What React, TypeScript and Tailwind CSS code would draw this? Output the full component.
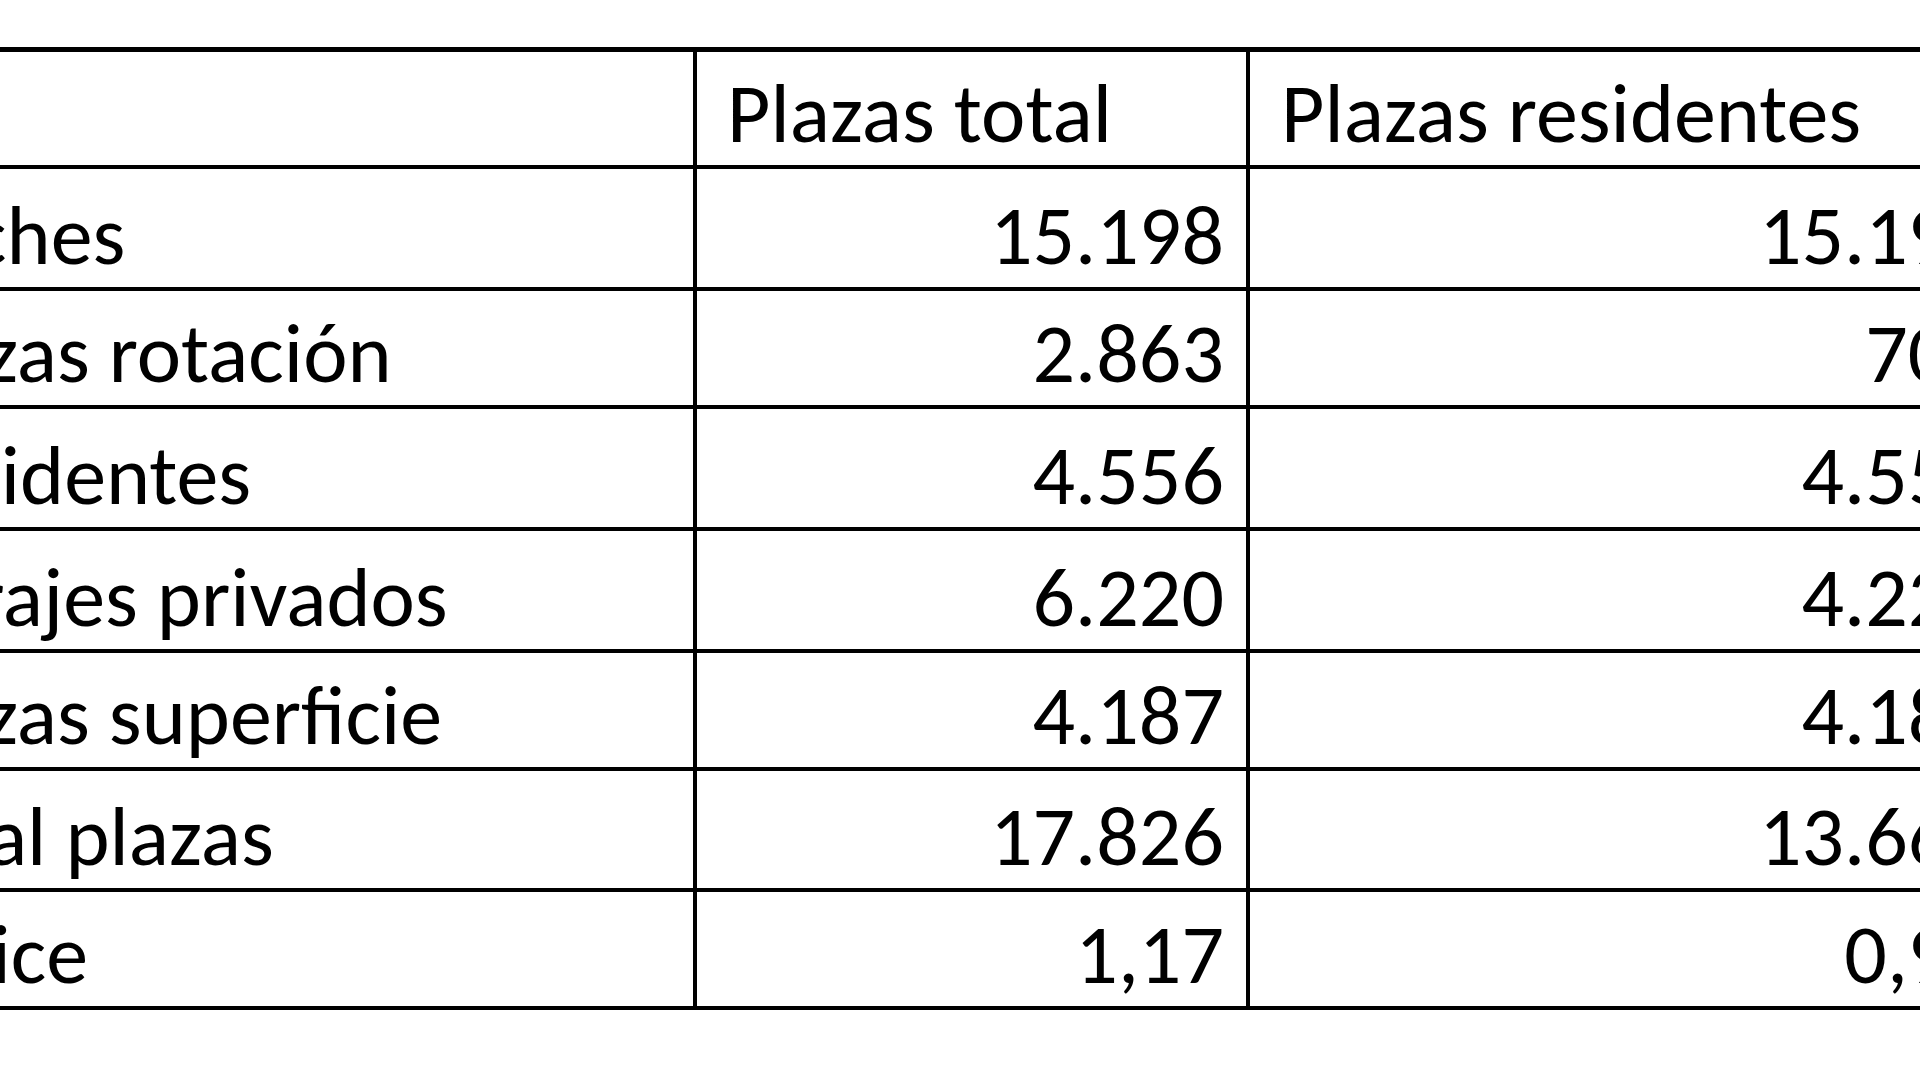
const rows = [
  { label: 'Coches', total: '15.198', residentes: '15.198', h: 'h-[122px]' },
  { label: 'Plazas rotación', total: '2.863', residentes: '700', h: 'h-[118px]' },
  { label: 'Residentes', total: '4.556', residentes: '4.556', h: 'h-[122px]' },
  { label: 'Garajes privados', total: '6.220', residentes: '4.220', h: 'h-[122px]' },
  { label: 'Plazas superficie', total: '4.187', residentes: '4.187', h: 'h-[118px]' },
  { label: 'Total plazas', total: '17.826', residentes: '13.663', h: 'h-[121px]' },
  { label: 'Índice', total: '1,17', residentes: '0,90', h: 'h-[118px]' },
];

export default function App() {
  return (
    <div className="h-[1080px] w-[1920px] overflow-hidden bg-white font-['Carlito','Lato',sans-serif] text-[84px] leading-none text-black">
      <div className="ml-[-148px] mt-[47px] w-[2167px] border-t-[5px] border-black">
        {/* Header */}
        <div className="flex h-[117px] border-b-4 border-black">
          <div className="w-[845px] shrink-0 border-r-4 border-black" />
          <div className="flex w-[553px] shrink-0 items-end border-r-4 border-black pb-[9px] pl-[30px]">
            Plazas total
          </div>
          <div className="flex w-[769px] shrink-0 items-end border-r-4 border-black pb-[9px] pl-[31px]">
            Plazas residentes
          </div>
        </div>

        {/* Rows */}
        {rows.map((row) => (
          <div key={row.label} className={`flex border-b-4 border-black ${row.h}`}>
            <div className="flex w-[845px] shrink-0 items-end border-r-4 border-black pb-[9px] pl-[30px]">
              {row.label}
            </div>
            <div className="flex w-[553px] shrink-0 items-end justify-end border-r-4 border-black pb-[9px] pr-[22px]">
              {row.total}
            </div>
            <div className="flex w-[769px] shrink-0 items-end justify-end border-r-4 border-black pb-[9px] pr-[22px]">
              {row.residentes}
            </div>
          </div>
        ))}
      </div>
    </div>
  );
}
